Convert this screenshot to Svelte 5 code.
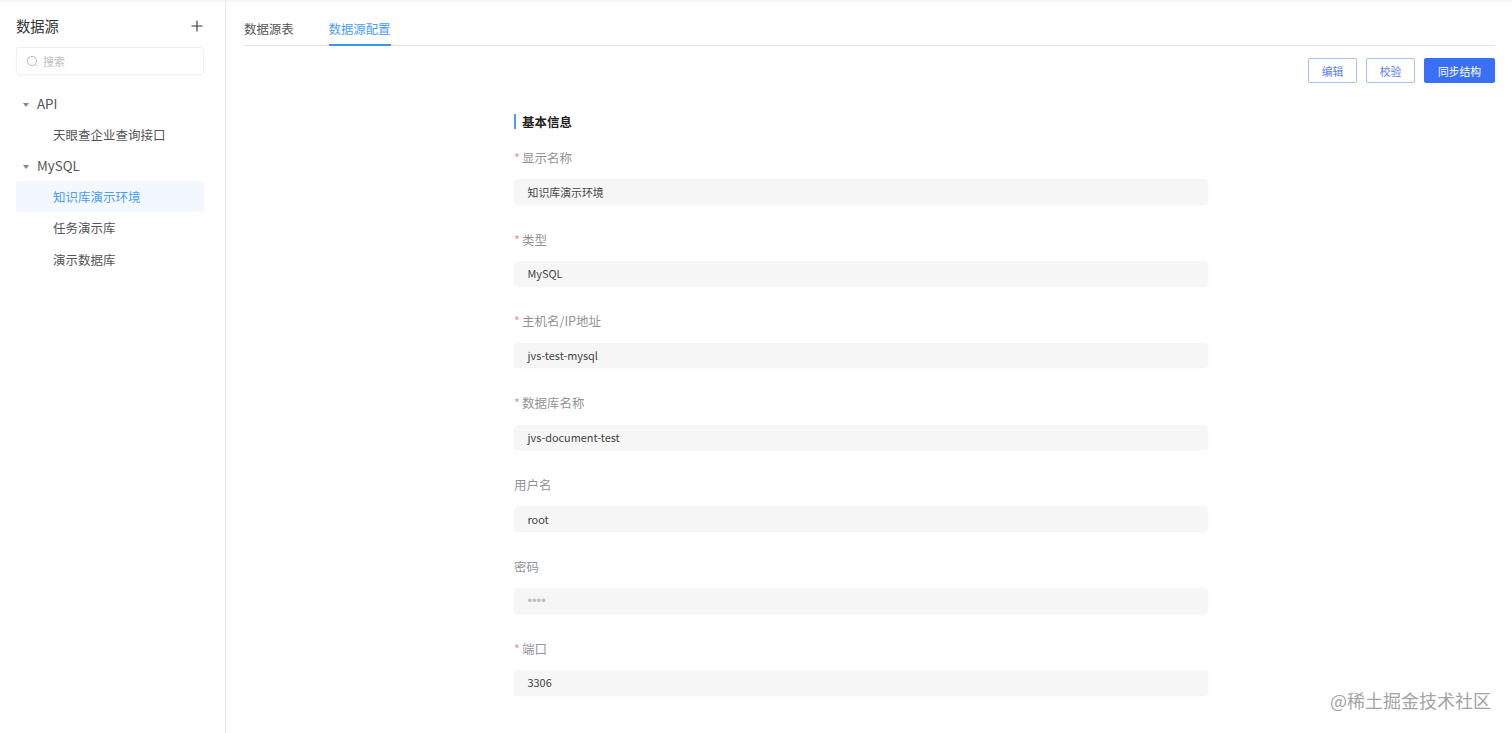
<script>
  const tree = [
    { label: 'API', items: [{ label: '天眼查企业查询接口' }] },
    {
      label: 'MySQL',
      items: [
        { label: '知识库演示环境', active: true },
        { label: '任务演示库' },
        { label: '演示数据库' }
      ]
    }
  ];

  const fields = [
    { label: '显示名称', value: '知识库演示环境', required: true },
    { label: '类型', value: 'MySQL', required: true },
    { label: '主机名/IP地址', value: 'jvs-test-mysql', required: true },
    { label: '数据库名称', value: 'jvs-document-test', required: true },
    { label: '用户名', value: 'root' },
    { label: '密码', value: '••••', secret: true },
    { label: '端口', value: '3306', required: true }
  ];
</script>

<div class="page">
  <aside class="sidebar">
    <div class="side-head">
      <span class="side-title">数据源</span>
      <svg class="plus" width="12" height="12" viewBox="0 0 12 12">
        <path d="M6 0.5v11M0.5 6h11" stroke="#333" stroke-width="1.1" fill="none" />
      </svg>
    </div>

    <div class="search">
      <svg width="13" height="13" viewBox="0 0 13 13" fill="none" stroke="#b8bcc4" stroke-width="1">
        <circle cx="6" cy="6" r="4.6" />
        <path d="M9.4 9.4l2 2" />
      </svg>
      <span>搜索</span>
    </div>

    <div class="tree">
      {#each tree as group}
        <div class="group">
          <span class="caret"></span>
          {group.label}
        </div>
        {#each group.items as item}
          <div class="leaf" class:active={item.active}>{item.label}</div>
        {/each}
      {/each}
    </div>
  </aside>

  <main class="content">
    <div class="tabs">
      <div class="tab">数据源表</div>
      <div class="tab current">数据源配置</div>
    </div>

    <div class="actions">
      <button class="btn">编辑</button>
      <button class="btn">校验</button>
      <button class="btn primary">同步结构</button>
    </div>

    <form class="form">
      <h3 class="section">基本信息</h3>
      {#each fields as field}
        <div class="field">
          <div class="label">
            {#if field.required}<i>*</i>{/if}{field.label}
          </div>
          <div class="input" class:secret={field.secret}>{field.value}</div>
        </div>
      {/each}
    </form>
  </main>

  <div class="watermark">@稀土掘金技术社区</div>
</div>

<style>
  :global(body) {
    margin: 0;
    background: #fff;
    font-family: "Noto Sans CJK SC", "Noto Sans", sans-serif;
  }

  .page {
    position: relative;
    display: flex;
    height: 733px;
    overflow: hidden;
    box-sizing: border-box;
    border-top: 2px solid #f3f3f3;
  }

  .sidebar {
    width: 226px;
    box-sizing: border-box;
    flex-shrink: 0;
    padding: 0 21px 0 16px;
    border-right: 1px solid #e9e9ec;
  }

  .side-head {
    display: flex;
    align-items: center;
    justify-content: space-between;
    height: 24px;
    margin-top: 11px;
    padding-right: 1px;
  }

  .plus {
    margin-top: 1px;
  }

  .side-title {
    font-size: 14.3px;
    color: #333;
  }

  .search {
    display: flex;
    align-items: center;
    gap: 4px;
    height: 28px;
    box-sizing: border-box;
    margin-top: 10px;
    padding-left: 9px;
    border: 1px solid #f0f1f3;
    border-radius: 3px;
    box-shadow: 0 0 2px rgba(0, 0, 0, 0.04);
    font-size: 11px;
    color: #bdbfc4;
  }

  .tree {
    margin-top: 13px;
  }

  .group,
  .leaf {
    height: 31.1px;
    display: flex;
    align-items: center;
    font-size: 12.5px;
    color: #555;
  }

  .group {
    padding-left: 7px;
    gap: 8px;
    font-size: 13.3px;
  }

  .caret {
    width: 0;
    height: 0;
    border-left: 3.5px solid transparent;
    border-right: 3.5px solid transparent;
    border-top: 4px solid #888;
    margin-top: 2px;
  }

  .leaf {
    padding-left: 37px;
  }

  .leaf.active {
    background: #f2f8fe;
    color: #4c9df2;
    border-radius: 2px;
  }

  .content {
    flex: 1;
    min-width: 0;
    padding: 0 17px 0 18px;
  }

  .tabs {
    display: flex;
    gap: 35px;
    height: 44px;
    box-sizing: border-box;
    border-bottom: 1px solid #dfe1e5;
  }

  .tab {
    height: 44px;
    box-sizing: border-box;
    padding-top: 17px;
    font-size: 12.4px;
    line-height: 20px;
    color: #555;
  }

  .tab.current {
    color: #4c9df2;
    border-bottom: 2px solid #3d94ee;
  }

  .actions {
    display: flex;
    justify-content: flex-end;
    gap: 9px;
    margin-top: 12px;
  }

  .btn {
    width: 49px;
    height: 25px;
    padding: 0;
    border: 1px solid #a9c0f5;
    border-radius: 2px;
    background: #fff;
    color: #5b80e8;
    font: inherit;
    font-size: 10.8px;
  }

  .btn.primary {
    width: 71px;
    background: #3a70f6;
    border-color: #3a70f6;
    color: #fff;
  }

  .form {
    width: 694px;
    margin: 31px 0 0 270px;
  }

  .section {
    margin: 0;
    padding-left: 6px;
    border-left: 2px solid #4c9df2;
    font-size: 12.5px;
    line-height: 15px;
    font-weight: 700;
    color: #222;
  }

  .field {
    height: 81.8px;
    box-sizing: border-box;
  }

  .section + .field {
    margin-top: 13.3px;
  }

  .label {
    height: 30px;
    display: flex;
    align-items: center;
    font-size: 12.5px;
    color: #909399;
  }

  .label i {
    width: 8px;
    font-style: normal;
    color: #e8918b;
  }

  .input {
    height: 24.5px;
    margin-top: 7px;
    padding-left: 13.5px;
    display: flex;
    align-items: center;
    border-radius: 4px;
    background: #f6f6f6;
    box-shadow: 0 1px 2px rgba(0, 0, 0, 0.06);
    font-size: 10.9px;
    color: #444;
  }

  .input.secret {
    color: #bcbec2;
    font-family: "Liberation Sans", sans-serif;
    font-size: 13px;
  }

  .watermark {
    position: absolute;
    right: 21px;
    top: 685px;
    font-size: 18px;
    line-height: 26px;
    color: #a3a3a3;
  }
</style>
